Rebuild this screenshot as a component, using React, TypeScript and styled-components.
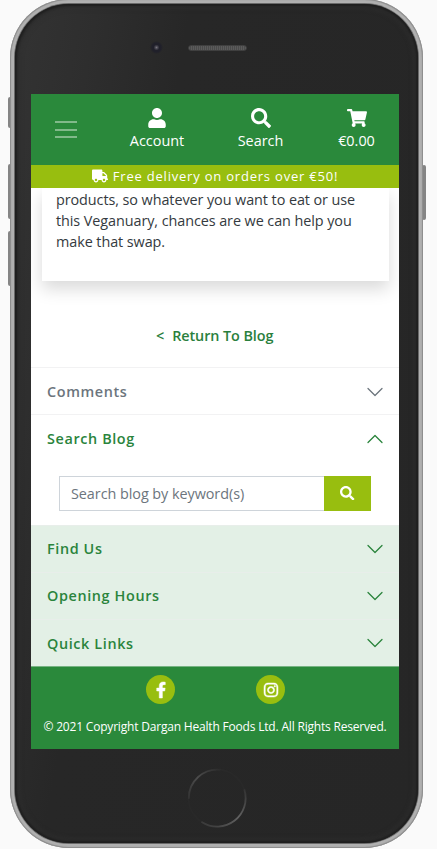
import React from "react";
import styled, { createGlobalStyle } from "styled-components";
import { FaUser, FaSearch, FaShoppingCart, FaTruck, FaFacebookF, FaInstagram } from "react-icons/fa";

const GlobalStyle = createGlobalStyle`
  *, *::before, *::after { box-sizing: border-box; }
  html, body { margin: 0; padding: 0; overflow: hidden; background: #fafafa; }
  body { font-family: "Open Sans", "Noto Sans", sans-serif; font-size: 14.4px; }
  svg { display: block; flex: none; }
`;

const Stage = styled.div`
  position: relative;
  width: 437px;
  height: 849px;
  overflow: hidden;
  padding-left: 10px;
`;

const SideButton = styled.span<{ $side: "left" | "right"; $top: number; $height: number }>`
  position: absolute;
  top: ${(p) => p.$top}px;
  ${(p) => (p.$side === "left" ? "left: 8px;" : "left: 422px;")}
  width: 4px;
  height: ${(p) => p.$height}px;
  border-radius: 2px;
  background: #858585;
`;

const Frame = styled.div`
  position: relative;
  width: 413px;
  height: 849px;
  margin-top: -1px;
  padding: 5px;
  border-radius: 59px;
  background: #b1b1b1;
  box-shadow: inset 0 0 0 1px #8f8f8f, inset 0 0 2px 1px #a0a0a0;
`;

const Bezel = styled.div`
  height: 839px;
  border-radius: 54px;
  background: linear-gradient(100deg, #333 0, #2e2e2e 15%, #272727 32%, #262626 100%);
  box-shadow: 0 0 0 1px #6a6a6a, inset 0 0 2px 2px #1f1f1f, inset 0 0 5px 4px #2e2e2e;
  display: flex;
  flex-direction: column;
  align-items: center;
`;

const Earpiece = styled.div`
  width: 100%;
  height: 90px;
  flex: none;
  display: flex;
  align-items: flex-start;
  padding: 37px 0 0 135px;
  gap: 25px;
`;

const Camera = styled.span`
  width: 13px;
  height: 13px;
  border-radius: 50%;
  background: radial-gradient(circle, #77757e 0, #44434d 1.5px, #20202a 3px, #20202a 4.5px, #282828 6.5px);
`;

const Speaker = styled.span`
  width: 59px;
  height: 6px;
  margin-top: 4px;
  border-radius: 3px;
  border: 1px solid #3f3f3f;
  background: repeating-linear-gradient(90deg, #5b5b5b 0 1px, #4b4b4b 1px 2px);
`;

const Screen = styled.main`
  width: 368px;
  height: 655px;
  flex: none;
  margin-right: 3px;
  display: flex;
  flex-direction: column;
  background: #fff;
  overflow: hidden;
`;

const Header = styled.header`
  height: 71px;
  flex: none;
  position: relative;
  z-index: 1;
  display: flex;
  align-items: flex-start;
  padding-left: 24px;
  background: #2a893b;
  color: #fff;
`;

const MenuButton = styled.button`
  width: 22px;
  height: 17px;
  margin: 27px 0 0;
  padding: 0;
  border: 0;
  background: none;
  display: flex;
  flex-direction: column;
  justify-content: space-between;
`;

const MenuLine = styled.span`
  width: 22px;
  height: 2px;
  background: #81b98a;
`;

const HeaderLink = styled.a<{ $width: number; $gap: number }>`
  width: ${(p) => p.$width}px;
  margin-left: ${(p) => p.$gap}px;
  padding-top: 14px;
  display: flex;
  flex-direction: column;
  align-items: center;
  white-space: nowrap;
  line-height: 22px;
`;

const HeaderIcon = styled.span`
  height: 22px;
  font-size: 20px;
`;

const Banner = styled.div`
  height: 23px;
  flex: none;
  position: relative;
  z-index: 1;
  display: flex;
  align-items: center;
  justify-content: center;
  gap: 5px;
  padding-bottom: 1px;
  background: #98be0f;
  color: #fff;
  font-size: 13px;
  letter-spacing: 0.79px;
  white-space: nowrap;
`;

const Article = styled.article`
  width: 347px;
  height: 93px;
  flex: none;
  margin-left: 11px;
  padding: 1px 14px 0;
  color: #343a40;
  line-height: 21px;
  letter-spacing: -0.075px;
  white-space: nowrap;
  background: #fff;
  box-shadow: 0 8px 16px rgba(0, 0, 0, 0.15);
`;

const ReturnLink = styled.a`
  height: 86px;
  flex: none;
  display: flex;
  gap: 8px;
  padding: 45px 0 0 125px;
  color: #2a7f3d;
  font-weight: 600;
  letter-spacing: -0.08px;
  line-height: 20px;
`;

const Panel = styled.section<{ $height: number; $tinted?: boolean; $muted?: boolean }>`
  height: ${(p) => p.$height}px;
  flex: none;
  padding: 0 16px;
  border-top: 1px solid ${(p) => (p.$tinted ? "#e8eeea" : "#f2f2f3")};
  background: ${(p) => (p.$tinted ? "#e3f0e6" : "#fff")};
  color: ${(p) => (p.$muted ? "#6c757d" : "#2a843c")};
`;

const PanelTitle = styled.h2<{ $height?: number }>`
  height: ${(p) => p.$height ?? 47}px;
  margin: 0;
  display: flex;
  align-items: center;
  justify-content: space-between;
  font-size: 14.4px;
  font-weight: 600;
  letter-spacing: 0.62px;
`;

const SearchForm = styled.form`
  display: flex;
  height: 35px;
  margin: 14px 12px 0;
`;

const SearchInput = styled.input`
  width: 265px;
  padding: 0 11px;
  border: 1px solid #ced4da;
  border-right: 0;
  border-radius: 0;
  background: #fff;
  font: 14.4px "Open Sans", sans-serif;
  letter-spacing: -0.05px;
  outline: 0;
  &::placeholder { color: #6c757d; opacity: 1; }
`;

const SearchButton = styled.button`
  width: 47px;
  padding: 0 0 1px;
  border: 0;
  background: #98be0f;
  color: #fff;
  font-size: 14.4px;
  display: flex;
  align-items: center;
  justify-content: center;
`;

const Footer = styled.footer`
  height: 83px;
  flex: none;
  border-top: 1px solid #77b383;
  background: #2a893b;
  color: #fff;
  font-size: 12px;
  letter-spacing: -0.19px;
  white-space: nowrap;
  text-align: center;
`;

const Socials = styled.div`
  display: flex;
  gap: 81px;
  padding: 8px 0 0 115px;
`;

const SocialLink = styled.a`
  width: 29px;
  height: 29px;
  border-radius: 50%;
  display: flex;
  align-items: center;
  justify-content: center;
  background: #98be0f;
  font-size: 16px;
  svg { stroke: currentColor; stroke-width: 16px; overflow: visible; }
`;

const Copyright = styled.p`
  margin: 13px 0 0;
  line-height: 20px;
`;

const HomeButton = styled.svg`
  margin: 18px 0 0;
`;

function Chevron({ up = false }: { up?: boolean }) {
  return (
    <svg width="16" height="16" viewBox="0 0 16 16" fill="none" stroke="currentColor" strokeWidth="1.25" strokeLinecap="round" strokeLinejoin="round">
      <path d={up ? "M1 11.5 8 4.5l7 7" : "M1 4.5l7 7 7-7"} />
    </svg>
  );
}

export default function App() {
  return (
    <>
      <GlobalStyle />
      <Stage>
        <SideButton $side="left" $top={97} $height={31} />
        <SideButton $side="left" $top={164} $height={55} />
        <SideButton $side="left" $top={231} $height={55} />
        <SideButton $side="right" $top={165} $height={55} />
        <Frame>
          <Bezel>
            <Earpiece>
              <Camera />
              <Speaker />
            </Earpiece>
            <Screen>
              <Header>
                <MenuButton aria-label="Menu">
                  <MenuLine />
                  <MenuLine />
                  <MenuLine />
                </MenuButton>
                <HeaderLink $width={54} $gap={53}>
                  <HeaderIcon><FaUser /></HeaderIcon>
                  Account
                </HeaderLink>
                <HeaderLink $width={45} $gap={54}>
                  <HeaderIcon><FaSearch /></HeaderIcon>
                  Search
                </HeaderLink>
                <HeaderLink $width={37} $gap={55}>
                  <HeaderIcon><FaShoppingCart /></HeaderIcon>
                  €0.00
                </HeaderLink>
              </Header>
              <Banner>
                <FaTruck size={16} />
                Free delivery on orders over €50!
              </Banner>
              <Article>
                products, so whatever you want to eat or use
                <br />
                this Veganuary, chances are we can help you
                <br />
                make that swap.
              </Article>
              <ReturnLink>
                <span>&lt;</span>
                <span>Return To Blog</span>
              </ReturnLink>
              <Panel $height={47} $muted>
                <PanelTitle>Comments <Chevron /></PanelTitle>
              </Panel>
              <Panel $height={111}>
                <PanelTitle>Search Blog <Chevron up /></PanelTitle>
                <SearchForm>
                  <SearchInput placeholder="Search blog by keyword(s)" />
                  <SearchButton type="button" aria-label="Search"><FaSearch /></SearchButton>
                </SearchForm>
              </Panel>
              <Panel $height={47} $tinted>
                <PanelTitle $height={45}>Find Us <Chevron /></PanelTitle>
              </Panel>
              <Panel $height={47} $tinted>
                <PanelTitle $height={45}>Opening Hours <Chevron /></PanelTitle>
              </Panel>
              <Panel $height={47} $tinted>
                <PanelTitle $height={46}>Quick Links <Chevron /></PanelTitle>
              </Panel>
              <Footer>
                <Socials>
                  <SocialLink><FaFacebookF /></SocialLink>
                  <SocialLink><FaInstagram /></SocialLink>
                </Socials>
                <Copyright>© 2021 Copyright Dargan Health Foods Ltd. All Rights Reserved.</Copyright>
              </Footer>
            </Screen>
            <HomeButton width="62" height="62" viewBox="0 0 62 62" fill="none" strokeWidth="1.8" strokeLinecap="round">
              <defs>
                <linearGradient id="upper" x1="0" y1="1" x2="1" y2="0">
                  <stop offset="0" stopColor="#333" />
                  <stop offset="0.5" stopColor="#4c4c4c" />
                  <stop offset="1" stopColor="#2c2c2c" />
                </linearGradient>
                <linearGradient id="lower" x1="1" y1="0" x2="0" y2="1">
                  <stop offset="0" stopColor="#333" />
                  <stop offset="0.45" stopColor="#626262" />
                  <stop offset="1" stopColor="#363636" />
                </linearGradient>
              </defs>
              <circle cx="31" cy="31" r="28.5" stroke="#292929" />
              <path d="M2.8 31A28.5 28.5 0 0 1 34 2.7" stroke="url(#upper)" />
              <path d="M58.5 23A28.5 28.5 0 0 1 16 55.2" stroke="url(#lower)" />
            </HomeButton>
          </Bezel>
        </Frame>
      </Stage>
    </>
  );
}
